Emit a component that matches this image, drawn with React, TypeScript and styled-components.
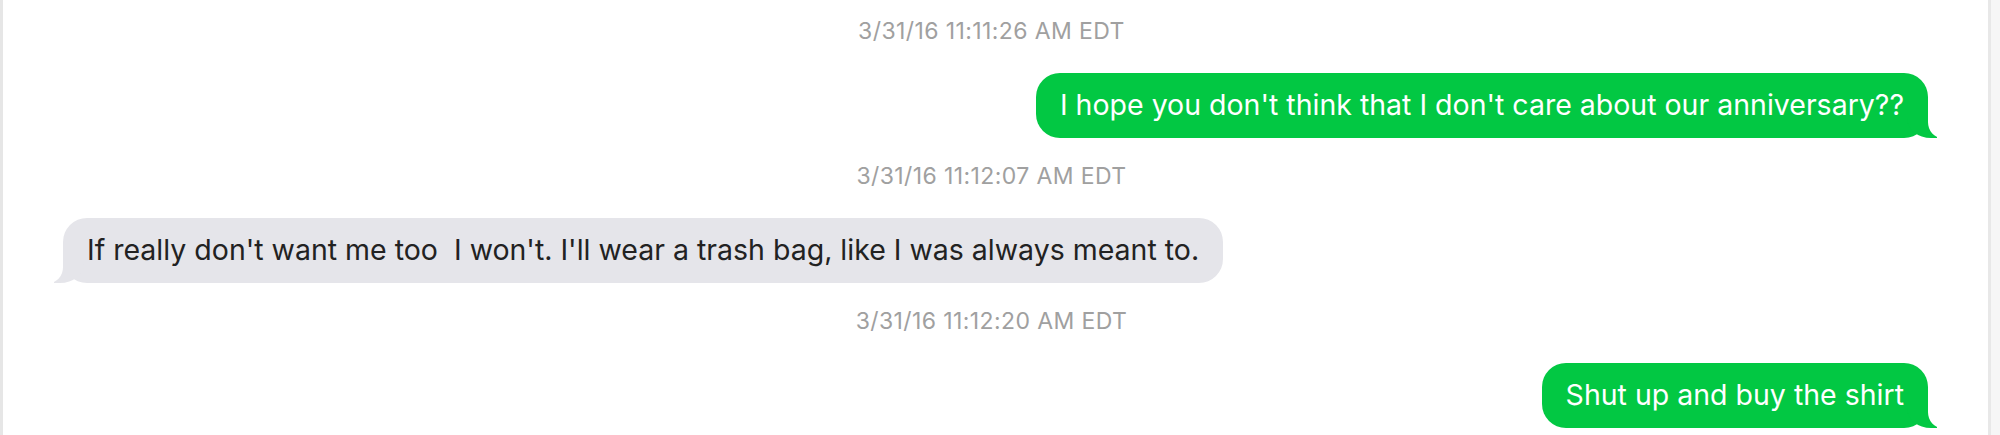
import React from "react";
import styled, { createGlobalStyle, css } from "styled-components";

const Global = createGlobalStyle`
  html, body { margin: 0; padding: 0; background: #ffffff; }
  body { font-family: Inter, "Noto Sans", "Liberation Sans", sans-serif; }
  * { box-sizing: border-box; }
`;

const Window = styled.div`
  display: flex;
  height: 435px;
  overflow: hidden;
  background: #ffffff;
  border-left: 3px solid #e6e6e6;
`;

const Transcript = styled.div`
  flex: 1;
  display: flex;
  flex-direction: column;
  padding: 0 60px;
  margin-top: -7px;
`;

const Stamp = styled.div`
  height: 80px;
  padding: 0 8px 4px 0;
  display: flex;
  align-items: center;
  justify-content: center;
  font-size: 23px;
  font-weight: 400;
  color: #a0a0a0;
  letter-spacing: 0.4px;
`;

type Side = "me" | "them";

const Row = styled.div<{ $side: Side }>`
  display: flex;
  justify-content: ${(p) => (p.$side === "me" ? "flex-end" : "flex-start")};
`;

const Bubble = styled.div<{ $side: Side }>`
  position: relative;
  height: 65px;
  padding: 14px 24px 16px;
  line-height: 35px;
  font-size: 28.5px;
  border-radius: 24px;
  white-space: pre;
  ${(p) =>
    p.$side === "me"
      ? css`
          background: #02c843;
          color: #ffffff;
          &::before {
            content: "";
            position: absolute;
            bottom: 0;
            right: -9px;
            width: 30px;
            height: 30px;
            background: #02c843;
            border-bottom-left-radius: 24px 20px;
          }
          &::after {
            content: "";
            position: absolute;
            bottom: 0;
            right: -14px;
            width: 14px;
            height: 30px;
            background: #ffffff;
            border-bottom-left-radius: 14px 16px;
          }
        `
      : css`
          background: #e5e5ea;
          color: #222222;
          &::before {
            content: "";
            position: absolute;
            bottom: 0;
            left: -9px;
            width: 30px;
            height: 30px;
            background: #e5e5ea;
            border-bottom-right-radius: 24px 20px;
          }
          &::after {
            content: "";
            position: absolute;
            bottom: 0;
            left: -14px;
            width: 14px;
            height: 30px;
            background: #ffffff;
            border-bottom-right-radius: 14px 16px;
          }
        `}
`;

const Text = styled.span`
  position: relative;
  z-index: 1;
`;

const Scrollbar = styled.div`
  width: 12px;
  flex: none;
  background: #f6f6f6;
  border-left: 3px solid #e8e8e8;
`;

const messages: { time: string; side: Side; text: string }[] = [
  {
    time: "3/31/16 11:11:26 AM EDT",
    side: "me",
    text: "I hope you don't think that I don't care about our anniversary??",
  },
  {
    time: "3/31/16 11:12:07 AM EDT",
    side: "them",
    text: "If really don't want me too  I won't. I'll wear a trash bag, like I was always meant to.",
  },
  {
    time: "3/31/16 11:12:20 AM EDT",
    side: "me",
    text: "Shut up and buy the shirt",
  },
];

export default function App() {
  return (
    <>
      <Global />
      <Window>
        <Transcript>
          {messages.map((m, i) => (
            <React.Fragment key={i}>
              <Stamp>{m.time}</Stamp>
              <Row $side={m.side}>
                <Bubble $side={m.side}>
                  <Text>{m.text}</Text>
                </Bubble>
              </Row>
            </React.Fragment>
          ))}
        </Transcript>
        <Scrollbar />
      </Window>
    </>
  );
}
